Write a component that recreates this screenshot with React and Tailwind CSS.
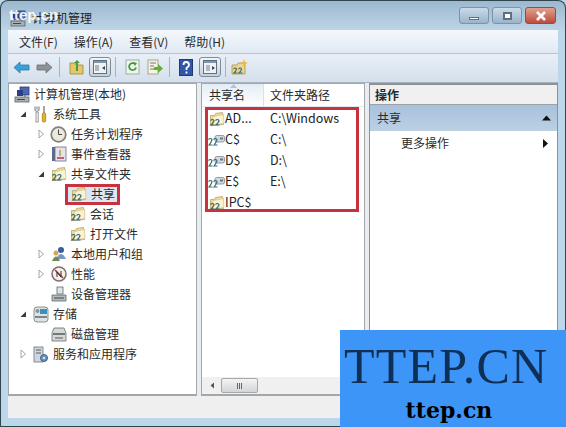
import React from "react";

function ShareFolder() {
  return (
    <svg width="16" height="16" viewBox="0 0 16 16" className="shrink-0">
      <path d="M1.500 4.500 L5.500 4.500 L6.500 2.500 L13.500 1.500 L14.500 13.500 L1.500 14.500 Z" fill="#f0dc9c" stroke="#b5a36a" strokeWidth="0.800" />
      <path d="M4 5.500 L14.500 3.500 L15 12.500 L4 14 Z" fill="#fbf2cf" stroke="#cdb97c" strokeWidth="0.600" />
      <path d="M1.500 9.500 Q3.500 7.500 5 9.500 Q5 11 2 14 H5.500" stroke="#3f6b52" strokeWidth="1.200" fill="none" />
      <path d="M6.500 9.500 Q8.500 7.500 10 9.500 Q10 11 7 14 H10.500" stroke="#2f6b8a" strokeWidth="1.200" fill="none" />
    </svg>
  );
}
function ShareDrive() {
  return (
    <svg width="17" height="14" viewBox="0 0 17 14" className="shrink-0">
      <rect x="7" y="2.500" width="9.500" height="6.500" rx="1.800" fill="#d3d9dc" stroke="#7b878c" strokeWidth="0.800" />
      <rect x="12" y="4.500" width="3" height="2" fill="#5f7884" />
      <path d="M0.500 6.500 Q2.500 4.500 4 6.500 Q4 8 1 12 H4.500" stroke="#3f6b52" strokeWidth="1.200" fill="none" />
      <path d="M5.500 6.500 Q7.500 4.500 9 6.500 Q9 8 6 12 H9.500" stroke="#2f6b8a" strokeWidth="1.200" fill="none" />
    </svg>
  );
}
function Computer() {
  return (
    <svg width="16" height="17" viewBox="0 0 16 17" className="shrink-0">
      <rect x="6" y="1" width="9" height="8" fill="#4a68ae" stroke="#2a3a6a" strokeWidth="0.800" />
      <rect x="3" y="4" width="6" height="6" fill="#2c3f86" />
      <path d="M11 9V11" stroke="#5e666c" />
      <rect x="1" y="11" width="14" height="5" fill="#a9b0b4" stroke="#5e666c" strokeWidth="0.800" />
      <path d="M3 13.500H11" stroke="#444" />
    </svg>
  );
}
function Tools() {
  return (
    <svg width="14" height="18" viewBox="0 0 14 18" className="shrink-0">
      <path d="M3 1.500V4.500M1 1.500V5Q3 7.500 5 5V1.500" stroke="#8a8a8a" strokeWidth="1.200" fill="none" />
      <rect x="2" y="7" width="2.200" height="10" fill="#f2f2f2" stroke="#777" strokeWidth="0.700" />
      <path d="M10 1V8" stroke="#8a8a8a" strokeWidth="1.500" />
      <rect x="8.300" y="8" width="3.400" height="9" rx="1.200" fill="#e6b71c" stroke="#8a6a10" strokeWidth="0.600" />
    </svg>
  );
}
function Clock() {
  return (
    <svg width="17" height="17" viewBox="0 0 17 17" className="shrink-0">
      <circle cx="8.500" cy="8.500" r="7.300" fill="#ece8dc" stroke="#84807a" strokeWidth="1.700" />
      <path d="M8.500 3.500V8.500H12" stroke="#4a4a4a" strokeWidth="1" fill="none" />
    </svg>
  );
}
function EventLog() {
  return (
    <svg width="16" height="16" viewBox="0 0 16 16" className="shrink-0">
      <rect x="1" y="1" width="3" height="14" fill="#5a6c88" />
      <rect x="4" y="1" width="11" height="14" fill="#e5e2ee" stroke="#6c6c8c" strokeWidth="0.800" />
      <path d="M6 12H13" stroke="#b8324a" strokeWidth="1.500" />
      <path d="M9 4V10" stroke="#b8a030" strokeWidth="1.500" />
    </svg>
  );
}
function Users() {
  return (
    <svg width="16" height="16" viewBox="0 0 16 16" className="shrink-0">
      <circle cx="10" cy="4" r="3" fill="#3c5a9e" />
      <path d="M5 13 Q10 3 15 13Z" fill="#7d95c0" />
      <circle cx="5" cy="7" r="2.500" fill="#d0a65e" />
      <path d="M1 15 Q5 6 9 15Z" fill="#6e8b52" />
    </svg>
  );
}
function Perf() {
  return (
    <svg width="16" height="16" viewBox="0 0 16 16" className="shrink-0">
      <circle cx="8" cy="8" r="7" fill="#f4efe8" stroke="#7c6f70" strokeWidth="1.500" />
      <path d="M4 4L12 12" stroke="#a8283c" strokeWidth="1.500" />
      <path d="M6 11V6L10 11V5" stroke="#333" fill="none" />
    </svg>
  );
}
function Device() {
  return (
    <svg width="16" height="16" viewBox="0 0 16 16" className="shrink-0">
      <rect x="6" y="1" width="6" height="7" fill="#e0e4e6" stroke="#5e6a70" strokeWidth="0.800" />
      <path d="M1 9H15V15H1Z" fill="#b4bbbe" stroke="#5e6a70" strokeWidth="0.800" />
      <path d="M3 12H13" stroke="#41494d" />
    </svg>
  );
}
function Storage() {
  return (
    <svg width="16" height="17" viewBox="0 0 16 17" className="shrink-0">
      <rect x="1" y="1" width="14" height="15" rx="3" fill="#dde2e4" stroke="#71797c" strokeWidth="0.800" />
      <rect x="7" y="3" width="7" height="5" fill="#3d8fc0" />
      <circle cx="4.500" cy="5" r="2" fill="#8a9498" />
      <path d="M2 11H14" stroke="#5e666a" strokeWidth="1.500" />
    </svg>
  );
}
function Disk() {
  return (
    <svg width="16" height="15" viewBox="0 0 16 15" className="shrink-0">
      <path d="M3 1H13L15 6V14H1V6Z" fill="#d5d8d8" stroke="#666d6e" strokeWidth="0.800" />
      <path d="M2 7H14" stroke="#53595a" strokeWidth="1.500" />
      <path d="M4 11H12" stroke="#53595a" />
    </svg>
  );
}
function Services() {
  return (
    <svg width="16" height="17" viewBox="0 0 16 17" className="shrink-0">
      <rect x="1" y="1" width="9" height="15" fill="#cfd6dc" stroke="#6a7680" strokeWidth="0.800" />
      <path d="M3 4H8M3 7H8" stroke="#55616a" />
      <circle cx="11" cy="12" r="3.500" fill="#6a93bd" stroke="#3e6288" />
      <circle cx="11" cy="12" r="1" fill="#fff" />
    </svg>
  );
}

function Arrow({ open, hidden }) {
  return (
    <span className="w-[12px] h-[12px] shrink-0 flex items-center justify-center">
      {hidden ? null : open ? (
        <svg width="8" height="8" viewBox="0 0 8 8"><path d="M7 1.500V7H1.500Z" fill="#3a3a3a" /></svg>
      ) : (
        <svg width="7" height="10" viewBox="0 0 7 10"><path d="M1 1L5.500 5L1 9Z" fill="#fff" stroke="#a6a6a6" /></svg>
      )}
    </span>
  );
}

function TreeRow({ pl, exp, icon, gap = "gap-[5px]", ml = "ml-[4px]", children }) {
  return (
    <div className={`h-[20px] flex items-center ${pl}`}>
      {exp === "none" ? null : <Arrow open={exp === "open"} hidden={exp === "blank"} />}
      <span className={`flex items-center ${gap} ${exp === "none" ? "" : ml}`}>
        <span className="w-[15px] flex justify-center">{icon}</span>
        <span className="whitespace-nowrap">{children}</span>
      </span>
    </div>
  );
}

function ListRow({ icon, name, path }) {
  return (
    <div className="h-[21px] flex items-center pl-[6px]">
      <span className="w-[17px] flex justify-center shrink-0">{icon}</span>
      <span className="w-[45px] shrink-0 whitespace-nowrap">{name}</span>
      <span className="whitespace-nowrap">{path}</span>
    </div>
  );
}

function ToolBtn({ children }) {
  return (
    <span className="w-[22px] h-[20px] rounded-[3px] border border-[#7f8c98] bg-gradient-to-b from-[#f2f5f8] to-[#c4d0dc] flex items-center justify-center">{children}</span>
  );
}
const Sep = () => <span className="w-px h-[20px] bg-[#a7b3bf]" />;

function PaneIcon({ right }) {
  return (
    <svg width="14" height="14" viewBox="0 0 14 14">
      <rect x="0.500" y="0.500" width="13" height="13" fill="#eef2f5" stroke="#63707c" />
      <rect x="1" y="1" width="12" height="2" fill="#7f95ab" />
      <path d={right ? "M3 6H7M3 8H7M3 10H7" : "M2 6H6M2 8H6M2 10H6"} stroke="#707c88" />
      <path d={right ? "M9 6L12 8L9 10Z" : "M12 6L9 8L12 10Z"} fill="#39475a" />
    </svg>
  );
}

export default function App() {
  return (
    <div className="relative w-[566px] h-[427px] overflow-hidden bg-[#bcd6ea] flex flex-col text-[12px] text-[#2a2a2a] font-['Noto_Sans_CJK_SC','Liberation_Sans',sans-serif] leading-none">
      {/* Title bar */}
      <div className="h-[30px] shrink-0 rounded-t-[8px] border-t border-x border-[#31454f] bg-gradient-to-b from-[#9cb9d0] to-[#bdd4e6] flex items-center pl-[9px] pr-[9px] pt-[5px]">
        <span className="relative w-[22px] h-[16px] flex items-center"><Computer /></span>
        <span className="text-[#222]">计算机管理</span>
        <div className="ml-auto flex gap-[3px] -mt-[5px]">
          <span className="w-[30px] h-[17px] rounded-[3px] border border-[#7d93a6] bg-gradient-to-b from-[#c9dbea] to-[#9bb4ca] flex items-end justify-center pb-[3px]"><span className="w-[10px] h-[3px] bg-white border border-[#5d7082]" /></span>
          <span className="w-[30px] h-[17px] rounded-[3px] border border-[#7d93a6] bg-gradient-to-b from-[#c9dbea] to-[#9bb4ca] flex items-center justify-center"><span className="w-[9px] h-[8px] bg-white border-2 border-[#5d7082]" /></span>
          <span className="w-[31px] h-[17px] rounded-[3px] border border-[#85534c] bg-gradient-to-b from-[#dfa08f] to-[#bc4a3c] flex items-center justify-center">
            <svg width="12" height="10" viewBox="0 0 12 10"><path d="M2 1L10 9M10 1L2 9" stroke="#fff" strokeWidth="2.600" /></svg>
          </span>
        </div>
      </div>

      <div className="flex-1 flex flex-col border-x border-[#31454f] px-[7px] pb-[8px] min-h-0">
        {/* Menu */}
        <div className="h-[24px] shrink-0 bg-gradient-to-b from-[#f4f8fc] to-[#e0e9f3] flex items-center gap-[16px] pl-[11px] border-b border-[#b9c6d2]">
          <span>文件(F)</span><span>操作(A)</span><span>查看(V)</span><span>帮助(H)</span>
        </div>
        {/* Toolbar */}
        <div className="h-[29px] shrink-0 bg-gradient-to-b from-[#e8eff7] to-[#d5e0ec] flex items-center pl-[5px] pb-[2px] border-b border-[#a9b4bf]">
          <svg width="17" height="13" viewBox="0 0 17 13" className="mr-[6px]"><path d="M1 6.500L7 1V4H16V9H7V12Z" fill="#39a0dc" stroke="#2a7aa8" strokeWidth="0.800" /></svg>
          <svg width="17" height="13" viewBox="0 0 17 13" className="mr-[6px]"><path d="M16 6.500L10 1V4H1V9H10V12Z" fill="#8d9296" stroke="#6c7074" strokeWidth="0.800" /></svg>
          <Sep />
          <span className="ml-[9px] mr-[5px] flex">
            <svg width="15" height="16" viewBox="0 0 15 16"><path d="M1 4H6L7 6H14V15H1Z" fill="#e6c765" stroke="#a08838" strokeWidth="0.800" /><path d="M7 12V4H5L8 1L11 4H9V12Z" fill="#4c9a3c" /></svg>
          </span>
          <ToolBtn><PaneIcon /></ToolBtn>
          <span className="w-[4px]" />
          <Sep />
          <span className="ml-[9px] mr-[7px] flex">
            <svg width="15" height="16" viewBox="0 0 15 16"><rect x="1" y="1" width="13" height="14" fill="#f0f4ee" stroke="#a2aca2" /><path d="M10 5A3.500 3.500 0 1 0 11 8.500" stroke="#3f9a40" strokeWidth="1.800" fill="none" /><path d="M8 3L12 4L10 7Z" fill="#3f9a40" /></svg>
          </span>
          <span className="mr-[6px] flex">
            <svg width="16" height="16" viewBox="0 0 16 16"><rect x="1" y="1" width="10" height="14" fill="#f5f3e2" stroke="#a8a490" /><path d="M3 4H9M3 7H7M3 10H7" stroke="#777" /><path d="M7 8H11V5L16 9.500L11 14V11H7Z" fill="#62ad3c" /></svg>
          </span>
          <Sep />
          <span className="ml-[9px] mr-[6px] flex">
            <svg width="14" height="17" viewBox="0 0 14 17"><rect x="0.500" y="0.500" width="13" height="16" fill="#3257a8" stroke="#22396e" /><path d="M4.500 6Q4.500 3 7 3Q10 3 10 6Q10 7.500 7.500 9V11M7.500 12.500V14.500" stroke="#fff" strokeWidth="1.800" fill="none" /></svg>
          </span>
          <ToolBtn><PaneIcon right /></ToolBtn>
          <span className="w-[4px]" />
          <Sep />
          <span className="ml-[5px] flex">
            <svg width="17" height="17" viewBox="0 0 17 17"><path d="M1 6H6L7 4H14V15H1Z" fill="#ecd489" stroke="#a8935a" strokeWidth="0.800" /><path d="M13 0L14 3L17 4L14 5L13 8L12 5L9 4L12 3Z" fill="#f0b93a" /><path d="M2.500 10Q4.500 8 5.500 10Q5.500 11.500 3 14H6.500" stroke="#3f6b52" strokeWidth="1.100" fill="none" /><path d="M7.500 10Q9.500 8 10.500 10Q10.500 11.500 8 14H11.500" stroke="#2f6b8a" strokeWidth="1.100" fill="none" /></svg>
          </span>
        </div>

        {/* Panes */}
        <div className="flex-1 min-h-0 flex gap-[4px] bg-[#e9edf2]">
          {/* Tree */}
          <div className="w-[189px] shrink-0 bg-white border-t border-x border-b-2 border-[#a3a7aa]">
            <TreeRow pl="pl-[5px]" exp="none" icon={<Computer />}>计算机管理(本地)</TreeRow>
            <TreeRow pl="pl-[8px]" exp="open" icon={<Tools />}>系统工具</TreeRow>
            <TreeRow pl="pl-[26px]" exp="closed" icon={<Clock />}>任务计划程序</TreeRow>
            <TreeRow pl="pl-[26px]" exp="closed" icon={<EventLog />}>事件查看器</TreeRow>
            <TreeRow pl="pl-[26px]" exp="open" icon={<ShareFolder />}>共享文件夹</TreeRow>
            <div className="h-[20px] flex items-center pl-[56px]">
              <span className="h-[21px] w-[55px] flex items-center gap-[4px] pl-[4px] border-[3px] border-[#c8323f] bg-[#dbe6f3]"><span className="-ml-[1px]"><ShareFolder /></span><span>共享</span></span>
            </div>
            <TreeRow pl="pl-[61px]" exp="none" icon={<ShareFolder />}>会话</TreeRow>
            <TreeRow pl="pl-[61px]" exp="none" icon={<ShareFolder />}>打开文件</TreeRow>
            <TreeRow pl="pl-[26px]" exp="closed" icon={<Users />}>本地用户和组</TreeRow>
            <TreeRow pl="pl-[26px]" exp="closed" icon={<Perf />}>性能</TreeRow>
            <TreeRow pl="pl-[26px]" exp="blank" icon={<Device />}>设备管理器</TreeRow>
            <TreeRow pl="pl-[8px]" exp="open" icon={<Storage />}>存储</TreeRow>
            <TreeRow pl="pl-[26px]" exp="blank" icon={<Disk />}>磁盘管理</TreeRow>
            <TreeRow pl="pl-[8px]" exp="closed" icon={<Services />}>服务和应用程序</TreeRow>
          </div>

          {/* List */}
          <div className="w-[164px] shrink-0 bg-white border-t border-x border-b-2 border-[#a3a7aa] flex flex-col relative">
            <div className="h-[23px] shrink-0 flex items-center border-b border-[#e2e9f0]">
              <span className="relative w-[62px] h-full flex items-center pl-[7px] bg-gradient-to-b from-[#e3edf6] to-[#fff] border-r border-[#d6e2ec]">共享名
                <svg width="7" height="4" viewBox="0 0 7 4" className="absolute left-[28px] top-[0px]"><path d="M3.500 0L7 4H0Z" fill="#b6c4d2" /></svg>
              </span>
              <span className="pl-[6px] whitespace-nowrap">文件夹路径</span>
            </div>
            <div className="relative pt-[1px] text-[#222] text-[12.500px]">
              <ListRow icon={<ShareFolder />} name="AD..." path="C:\Windows" />
              <ListRow icon={<ShareDrive />} name="C$" path="C:\" />
              <ListRow icon={<ShareDrive />} name="D$" path="D:\" />
              <ListRow icon={<ShareDrive />} name="E$" path="E:\" />
              <ListRow icon={<ShareFolder />} name="IPC$" path="" />
              <div className="absolute left-[3px] top-0 w-[154px] h-[105px] border-[3px] border-[#c8323f]" />
            </div>
            <div className="mt-auto h-[17px] bg-[#f0f0f0] flex items-center pl-[8px] gap-[6px]">
              <svg width="5" height="7" viewBox="0 0 5 7"><path d="M4 0.500V6.500L0.500 3.500Z" fill="#555" /></svg>
              <span className="w-[37px] h-[15px] rounded-[2px] border border-[#a2a8ac] bg-gradient-to-b from-[#f4f4f4] to-[#d5d5d5] flex items-center justify-center gap-[1px]">
                <span className="w-px h-[6px] bg-[#666]" /><span className="w-px h-[6px] bg-[#666]" /><span className="w-px h-[6px] bg-[#666]" />
              </span>
            </div>
          </div>

          {/* Actions */}
          <div className="flex-1 min-w-0 bg-white border-t-2 border-x border-b-2 border-[#8f9294] flex flex-col">
            <div className="h-[20px] shrink-0 bg-[#f0f0f0] flex items-center pl-[5px] font-bold border-b border-[#9ea3a6]">操作</div>
            <div className="h-[26px] shrink-0 bg-gradient-to-b from-[#a7c1dc] to-[#bcd0e4] flex items-center justify-between pl-[7px] pr-[6px]">
              <span>共享</span>
              <svg width="9" height="6" viewBox="0 0 9 6"><path d="M4.500 0.500L9 5.500H0Z" fill="#111" /></svg>
            </div>
            <div className="h-[24px] flex items-center justify-between pl-[31px] pr-[9px]">
              <span>更多操作</span>
              <svg width="5" height="9" viewBox="0 0 5 9"><path d="M0 0L5 4.500L0 9Z" fill="#111" /></svg>
            </div>
          </div>
        </div>
        {/* Status bar */}
        <div className="h-[22px] shrink-0 bg-[#efefef]" />
      </div>
      <div className="h-[1px] shrink-0 bg-[#31454f]" />

      {/* Watermarks */}
      <div className="absolute left-[9px] top-[7px] text-[15px] font-bold text-white font-['Liberation_Sans',sans-serif] opacity-90">ttep.cn</div>
      <div className="absolute left-[340px] top-[330px] w-[226px] h-[97px] bg-[#3d95f8] flex flex-col items-center">
        <span className="self-start ml-[4px] mt-[11px] text-[50px] leading-[50px] text-[#0f2f55] font-['Liberation_Serif',serif] whitespace-nowrap tracking-[1.200px]">TTEP.CN</span>
        <span className="-ml-[8px] mt-[7px] text-[22px] leading-[24px] font-black text-black font-['DejaVu_Serif',serif] whitespace-nowrap">ttep.cn</span>
      </div>
    </div>
  );
}
